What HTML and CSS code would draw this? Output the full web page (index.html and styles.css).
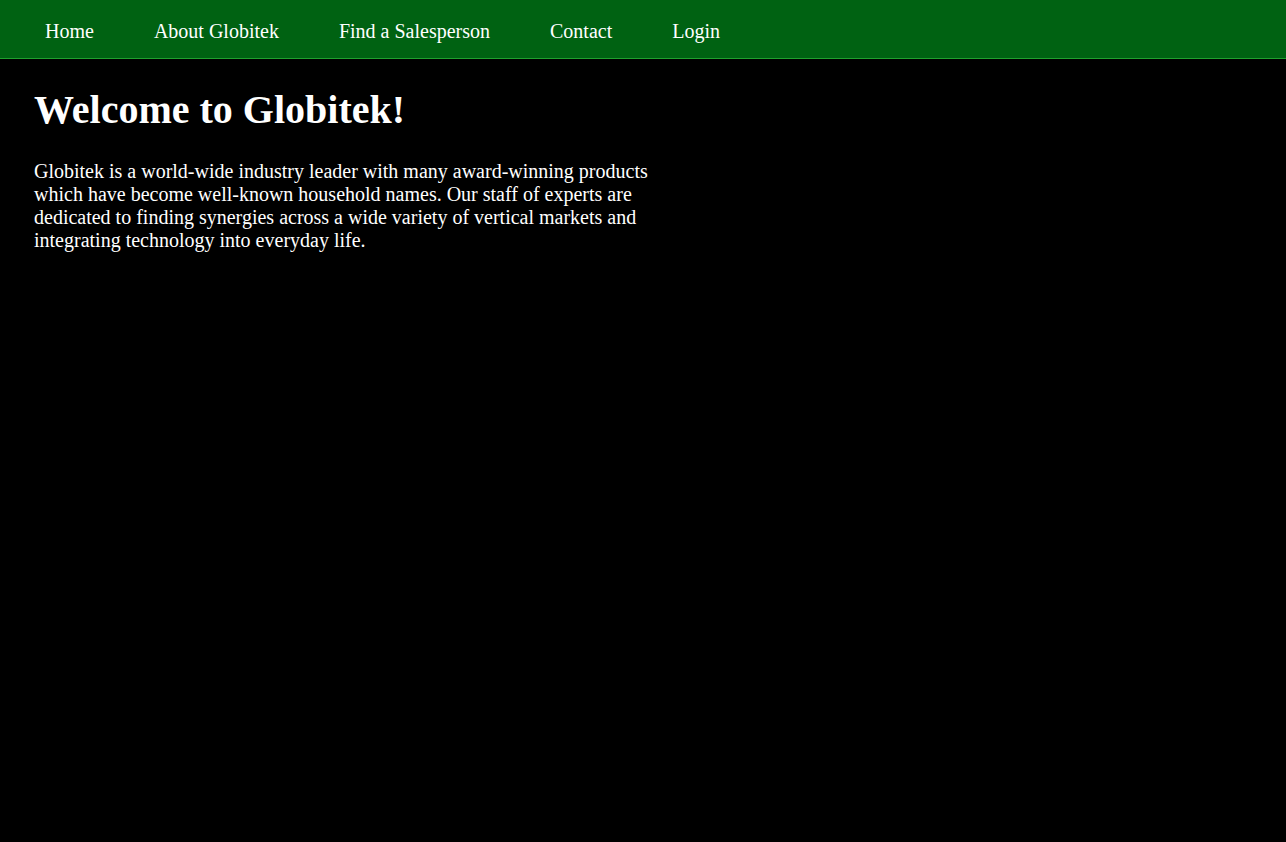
FILE: index.html
```html
<!DOCTYPE html>
<html lang="en">
<head>
<meta charset="utf-8">
<title>Globitek</title>
<link rel="stylesheet" href="styles.css">
</head>
<body>
<nav class="topnav">
  <a class="navlink" href="#">Home</a>
  <a class="navlink" href="#">About Globitek</a>
  <a class="navlink" href="#">Find a Salesperson</a>
  <a class="navlink" href="#">Contact</a>
  <a class="navlink" href="#">Login</a>
</nav>
<main class="content">
  <h1 class="title">Welcome to Globitek!</h1>
  <p class="intro">Globitek is a world-wide industry leader with many award-winning products which have become well-known household names. Our staff of experts are dedicated to finding synergies across a wide variety of vertical markets and integrating technology into everyday life.</p>
</main>
</body>
</html>
```

FILE: styles.css
```css
html, body {
  margin: 0;
  padding: 0;
  background: #000;
  color: #fff;
  font-family: "Liberation Serif", "Times New Roman", serif;
  font-size: 20px;
  height: 100%;
}
.topnav {
  display: flex;
  align-items: center;
  height: 58px;
  padding-left: 15px;
  background: #006212;
  border-bottom: 1px solid #1fa02e;
}
.navlink {
  color: #fff;
  text-decoration: none;
  padding: 0 30px;
  line-height: 23px;
  margin-top: 5px;
}
.content {
  padding: 0 34px;
  max-width: 640px;
}
.title {
  font-size: 40px;
  font-weight: bold;
  line-height: 46px;
  margin: 28px 0 27px;
}
.intro {
  margin: 0;
  line-height: 23px;
}
```
